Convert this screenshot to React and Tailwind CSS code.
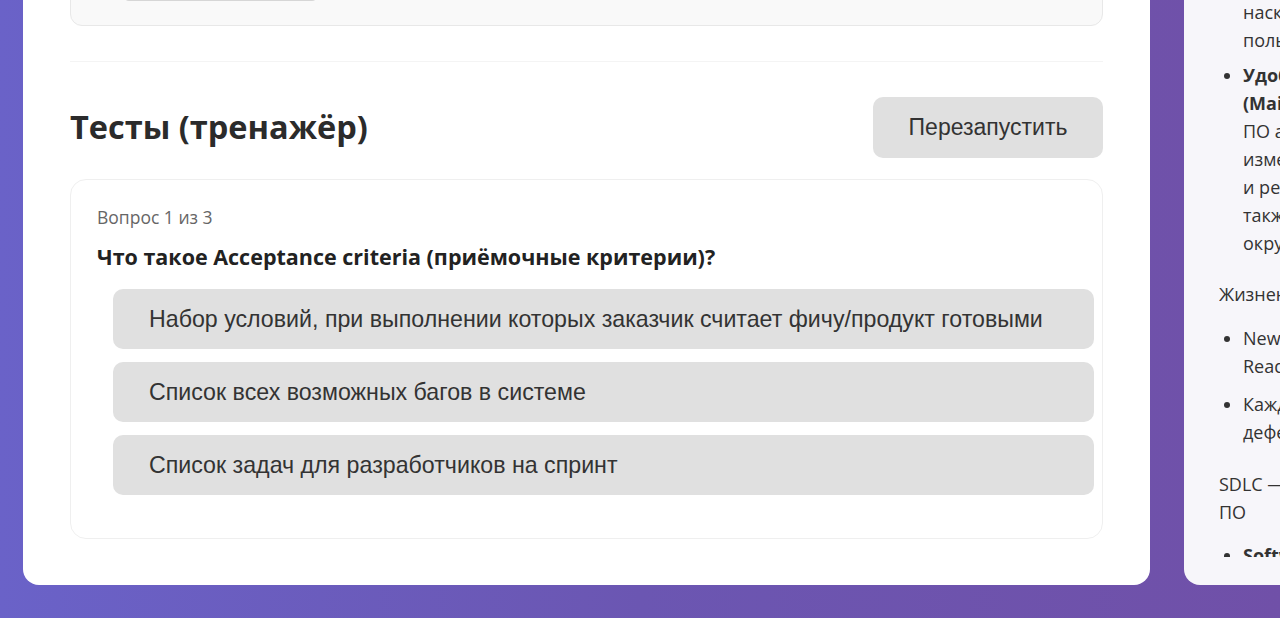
import React from "react";

const options = [
  "Набор условий, при выполнении которых заказчик считает фичу/продукт готовыми",
  "Список всех возможных багов в системе",
  "Список задач для разработчиков на спринт",
];

export default function App() {
  return (
    <div className="h-[618px] w-full overflow-hidden bg-linear-to-r from-[#6a62c8] via-[#6b56b2] to-[#7050a8] flex pb-[33px] pl-[23px] gap-[34px] font-['Open_Sans',sans-serif]">
      {/* main card */}
      <div className="w-[1127px] shrink-0 h-full bg-white rounded-b-[16px] overflow-hidden flex flex-col justify-end px-[47px] pb-[46px]">
        <div className="shrink-0 h-[70px] bg-[#f9f9f9] border border-[#e8e8e8] rounded-[12px] flex flex-col justify-end pb-[24px] pl-[52px]">
          <div className="w-[195px] h-[40px] bg-[#e0e0e0] border border-[#d6d6d6] rounded-[6px]" />
        </div>
        <div className="shrink-0 mt-[35px] h-px bg-[#f4f4f4]" />
        <div className="shrink-0 mt-[35px] flex items-center justify-between h-[61px]">
          <h2 className="text-[32.5px] font-bold text-[#2b2b2b] leading-none">Тесты (тренажёр)</h2>
          <button className="w-[230px] h-[61px] bg-[#e0e0e0] rounded-[10px] text-[23px] text-[#333] font-['Liberation_Sans',Arial,sans-serif]">
            Перезапустить
          </button>
        </div>
        <div className="shrink-0 mt-[21px] h-[360px] border border-[#efefef] rounded-[16px] pt-[25px] pl-[26px] pr-[26px]">
          <div className="text-[17.5px] leading-[24px] text-[#666]">Вопрос 1 из 3</div>
          <div className="mt-[14px] text-[21.5px] leading-[28px] font-bold text-[#222]">
            Что такое Acceptance criteria (приёмочные критерии)?
          </div>
          <div className="mt-[18px] ml-[16px] w-[981px] flex flex-col gap-[13px]">
            {options.map((o) => (
              <div
                key={o}
                className="h-[60px] bg-[#e0e0e0] rounded-[10px] flex items-center pl-[36px] text-[23.2px] text-[#333] font-['Liberation_Sans',Arial,sans-serif]"
              >
                {o}
              </div>
            ))}
          </div>
        </div>
      </div>

      {/* right card */}
      <div className="w-[420px] shrink-0 h-full bg-[#f7f6fa] rounded-b-[16px] flex flex-col pb-[28px] pl-[35px] pr-[20px] text-[18px] leading-[28px] text-[#333]">
        <div className="flex-1 overflow-hidden">
          <div className="-mt-[30px]">
            <ul className="list-disc pl-[24px] flex flex-col gap-[7px]">
              <li>
                <b>Удобство использования</b> —<br />
                насколько удобно ПО для конечного<br />
                пользователя.
              </li>
              <li>
                <b>Удобство сопровождения<br />(Maintainability)</b> — насколько легко<br />
                ПО анализировать,<br />
                изменять, тестировать<br />
                и ремонтировать, а<br />
                также переносить в другое<br />
                окружение.
              </li>
            </ul>
            <p className="mt-[23px]">Жизненный цикл дефекта</p>
            <ul className="mt-[16px] list-disc pl-[24px] flex flex-col gap-[10px]">
              <li>
                New → Assigned → Open → Fixed →<br />
                Ready for retest → Closed.
              </li>
              <li>
                Каждый статус отражает этап работы с<br />
                дефектом.
              </li>
            </ul>
            <p className="mt-[24px]">
              SDLC — жизненный цикл разработки<br />
              ПО
            </p>
            <ul className="mt-[15px] list-disc pl-[24px]">
              <li>
                <b>Software Development Life Cycle</b>
              </li>
            </ul>
          </div>
        </div>
      </div>
    </div>
  );
}
